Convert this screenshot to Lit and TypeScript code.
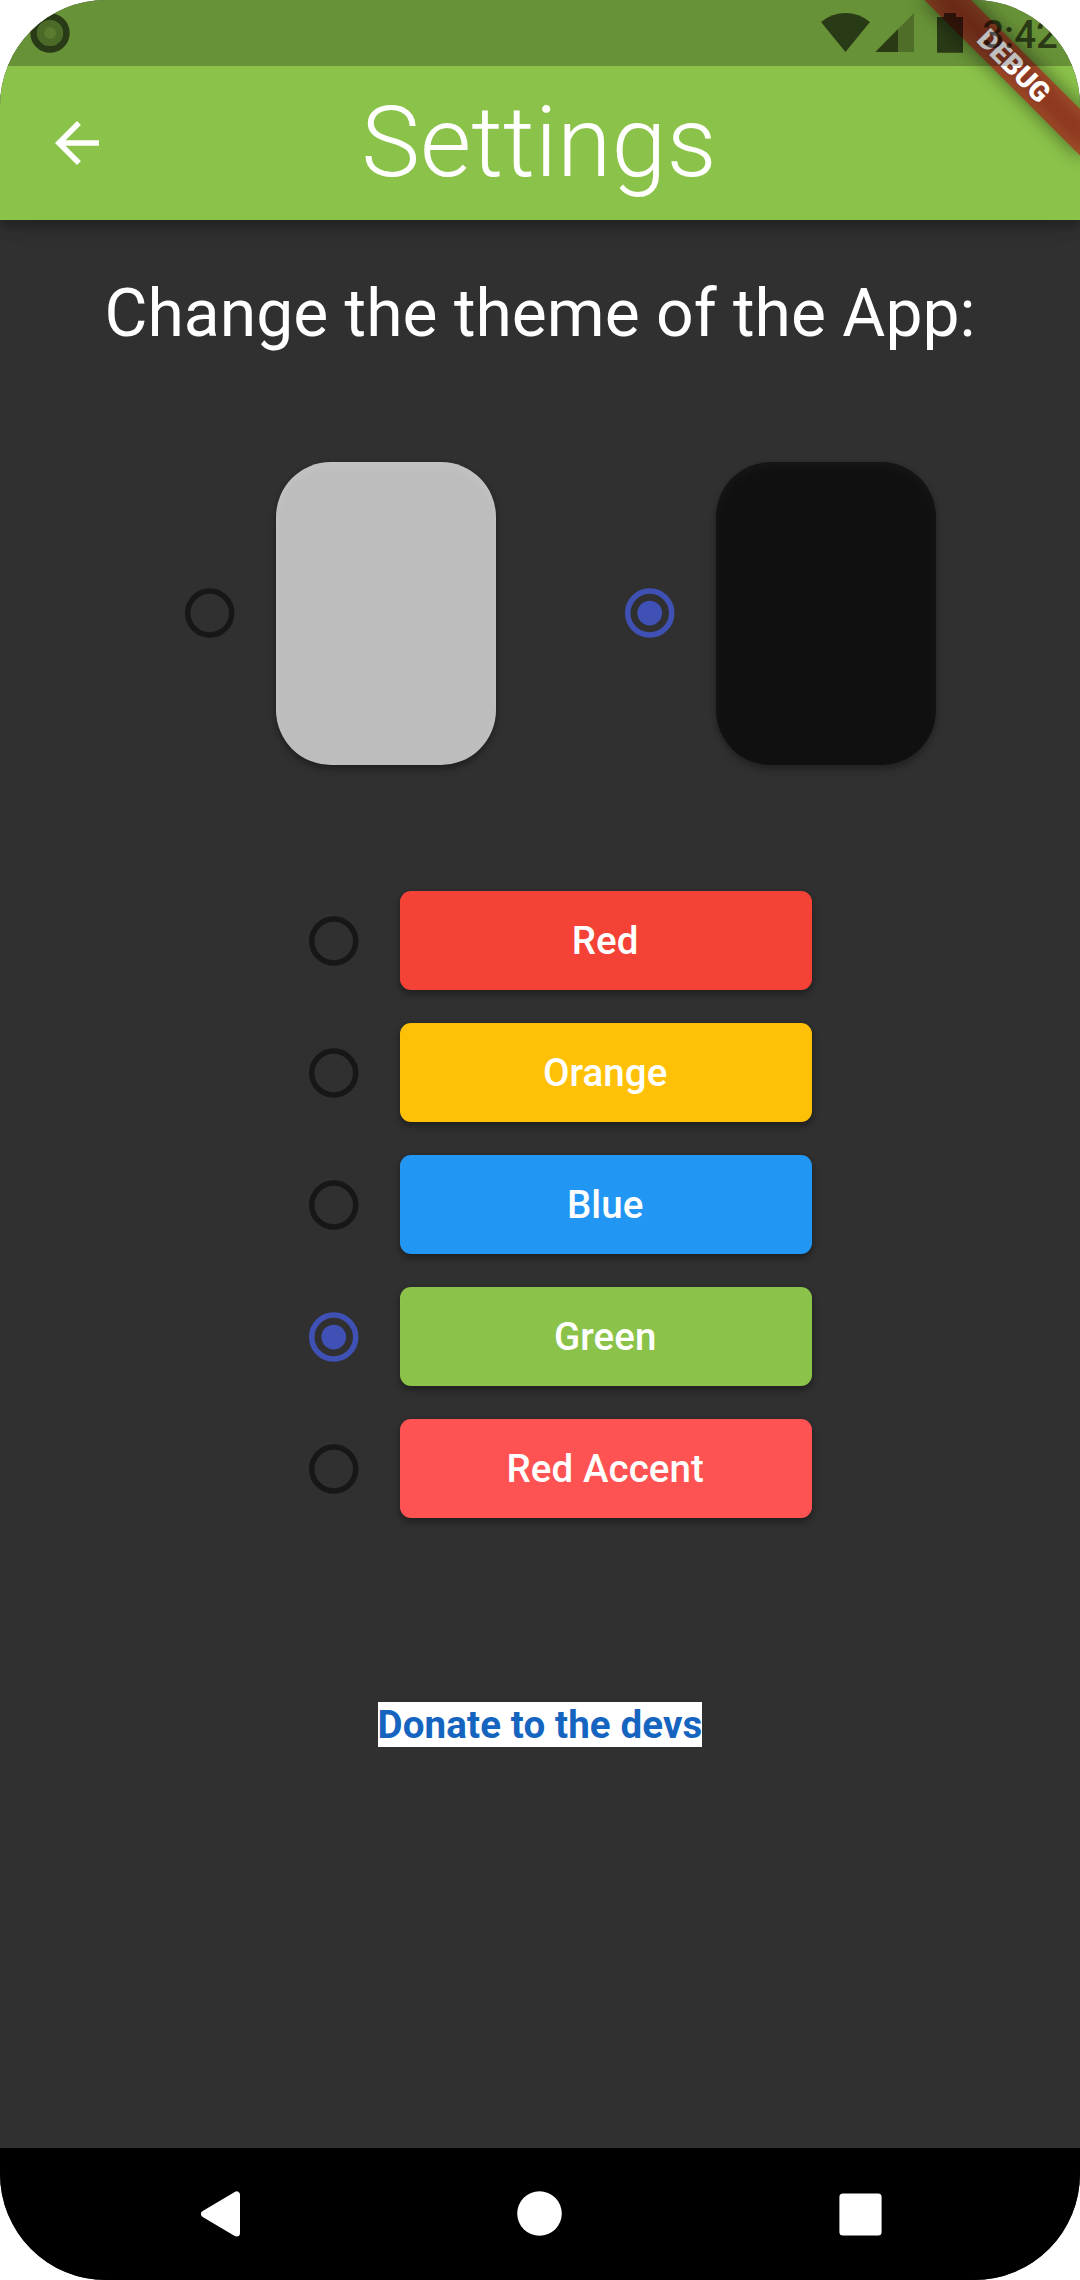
import { LitElement, html, svg, css } from "lit";
import { customElement, property, state } from "lit/decorators.js";
import { classMap } from "lit/directives/class-map.js";

@customElement("radio-mark")
class RadioMark extends LitElement {
  @property({ type: Boolean }) checked = false;

  static styles = css`
    :host {
      display: flex;
      align-items: center;
      justify-content: center;
      width: 132px;
      height: 132px;
      flex: none;
    }
    .mark { display: block; width: 66px; height: 66px; color: #171717; }
    .on { color: #3f51b5; }
  `;

  render() {
    return html`<svg class=${classMap({ mark: true, on: this.checked })} viewBox="0 0 24 24">
      <circle cx="11.9" cy="12" r="8" fill="none" stroke="currentColor" stroke-width="2"></circle>
      ${this.checked ? svg`<circle cx="11.9" cy="12" r="4.5" fill="currentColor"></circle>` : null}
    </svg>`;
  }
}

@customElement("app-root")
class AppRoot extends LitElement {
  @state() private theme = "dark";
  @state() private accent = "Green";

  private themes = ["light", "dark"];
  private accents = [
    { name: "Red", cls: "red" },
    { name: "Orange", cls: "orange" },
    { name: "Blue", cls: "blue" },
    { name: "Green", cls: "green" },
    { name: "Red Accent", cls: "red-accent" },
  ];

  static styles = css`
    :host {
      display: block;
      width: 1080px;
      height: 2280px;
      background: #fff;
      font-family: Roboto, "Liberation Sans", sans-serif;
      color: #fff;
    }
    .screen {
      position: relative;
      box-sizing: border-box;
      display: flex;
      flex-direction: column;
      width: 1080px;
      height: 2280px;
      overflow: hidden;
      border-radius: 106px;
      background: #303030;
    }
    .appbar {
      box-sizing: border-box;
      display: grid;
      grid-template-columns: 110px 1fr 110px;
      align-items: center;
      height: 220px;
      padding: 66px 22px 0;
      flex: none;
      background: #8bc34a;
      box-shadow: 0 6px 12px rgba(0, 0, 0, 0.26), 0 2px 24px rgba(0, 0, 0, 0.12);
    }
    .back { display: block; width: 66px; height: 66px; margin-left: 22px; }
    .title {
      margin: 0;
      padding: 0 2px 2px 0;
      text-align: center;
      font-size: 99px;
      line-height: 116px;
      font-weight: 300;
      white-space: nowrap;
    }
    .body {
      flex: 1;
      display: flex;
      flex-direction: column;
      align-items: center;
      padding-top: 55px;
    }
    .heading {
      margin: 0;
      font-size: 66px;
      line-height: 77px;
      font-weight: 400;
      white-space: nowrap;
    }
    .themes { display: flex; gap: 88.6px; margin-top: 110px; }
    .theme { display: flex; align-items: center; }
    .swatch { width: 220px; height: 302.5px; border-radius: 55px; }
    .light {
      background: #bdbdbd;
      box-shadow: 0 5px 7px rgba(0, 0, 0, 0.26), 0 1px 5px rgba(0, 0, 0, 0.16),
        inset 0 5px 10px rgba(255, 255, 255, 0.1);
    }
    .dark {
      background: #101010;
      box-shadow: 0 5px 7px rgba(0, 0, 0, 0.24), 0 1px 5px rgba(0, 0, 0, 0.12),
        inset 0 5px 12px rgba(255, 255, 255, 0.035);
    }
    .accents { display: flex; flex-direction: column; margin-top: 110px; }
    .accent { display: flex; align-items: center; height: 132px; }
    .button {
      box-sizing: border-box;
      display: flex;
      align-items: center;
      justify-content: center;
      width: 412.5px;
      height: 99px;
      border: 0;
      padding: 0 1.6px 0 0;
      border-radius: 11px;
      font: 500 38.5px/45px Roboto, "Liberation Sans", sans-serif;
      letter-spacing: 0.06px;
      color: #fff;
      box-shadow: 0 5px 7px rgba(0, 0, 0, 0.26), 0 1px 5px rgba(0, 0, 0, 0.16);
    }
    .red { background: #f44336; }
    .orange { background: #ffc107; }
    .blue { background: #2196f3; }
    .green { background: #8bc34a; }
    .red-accent { background: #ff5252; }
    .donate {
      box-sizing: border-box;
      height: 44.5px;
      margin-top: 167.5px;
      background: #fff;
      color: #1565c0;
      font-size: 38.5px;
      line-height: 46px;
      font-weight: 700;
      letter-spacing: 0.13px;
      white-space: nowrap;
    }
    .navbar {
      display: flex;
      align-items: center;
      justify-content: space-between;
      height: 132px;
      padding: 0 198px 0 201px;
      flex: none;
      background: #000;
    }
    .nav { display: block; }
    .home { margin-bottom: 1px; }
    .banner {
      position: absolute;
      top: 77px;
      left: 970px;
      width: 220px;
      height: 33px;
      transform-origin: 110px -77px;
      transform: rotate(45deg);
      text-align: center;
      font-size: 28.05px;
      line-height: 33px;
      font-weight: 900;
    }
    .banner::before,
    .banner::after {
      content: "";
      position: absolute;
      inset: 0;
    }
    .banner::before {
      z-index: -2;
      background: rgba(0, 0, 0, 0.5);
      filter: blur(10px);
    }
    .banner::after {
      z-index: -1;
      background: rgba(183, 28, 28, 0.627);
    }
    .status {
      position: absolute;
      inset: 0 0 auto 0;
      box-sizing: border-box;
      display: flex;
      align-items: flex-start;
      height: 66px;
      padding: 13px 22px 0 30px;
      background: rgba(0, 0, 0, 0.25);
      color: rgba(0, 0, 0, 0.6);
    }
    .record { display: block; width: 40px; height: 40px; margin-right: auto; }
    .indicators { display: block; width: 144px; height: 40px; margin-right: 18px; }
    .time { font-size: 38.5px; line-height: 43px; font-weight: 500; white-space: nowrap; }
  `;

  render() {
    return html`
      <div class="screen">
        <header class="appbar">
          <svg class="back" viewBox="0 0 24 24">
            <path fill="#fff" d="M20 11H7.83l5.59-5.59L12 4l-8 8 8 8 1.41-1.41L7.83 13H20v-2z"></path>
          </svg>
          <h1 class="title">Settings</h1>
        </header>
        <main class="body">
          <h2 class="heading">Change the theme of the App:</h2>
          <div class="themes">
            ${this.themes.map(
              (t) => html`<div class="theme" @click=${() => (this.theme = t)}>
                <radio-mark ?checked=${this.theme === t}></radio-mark>
                <div class=${classMap({ swatch: true, [t]: true })}></div>
              </div>`
            )}
          </div>
          <div class="accents">
            ${this.accents.map(
              (a) => html`<div class="accent" @click=${() => (this.accent = a.name)}>
                <radio-mark ?checked=${this.accent === a.name}></radio-mark>
                <button class=${classMap({ button: true, [a.cls]: true })}>${a.name}</button>
              </div>`
            )}
          </div>
          <div class="donate">Donate to the devs</div>
        </main>
        <nav class="navbar">
          <svg class="nav" width="39" height="46" viewBox="0 0 39 46">
            <path
              fill="#fff"
              stroke="#fff"
              stroke-width="7"
              stroke-linejoin="round"
              d="M3.5 22.9 35.5 3.9V41.9Z"
            ></path>
          </svg>
          <svg class="nav home" width="45" height="45" viewBox="0 0 45 45">
            <circle cx="22.5" cy="22.5" r="22.3" fill="#fff"></circle>
          </svg>
          <svg class="nav" width="43" height="43" viewBox="0 0 43 43">
            <rect x=".4" y=".4" width="42.2" height="42.2" rx="3.5" fill="#fff"></rect>
          </svg>
        </nav>
        <div class="banner">DEBUG</div>
        <div class="status">
          <svg class="record" viewBox="0 0 40 40">
            <circle cx="20" cy="20" r="16.4" fill="none" stroke="#000" stroke-opacity=".6" stroke-width="6.6"></circle>
            <circle cx="20" cy="20" r="13" fill="#000" fill-opacity=".27"></circle>
            <circle cx="20" cy="20" r="6" fill="#5a7b2f"></circle>
          </svg>
          <svg class="indicators" viewBox="0 0 144 40" fill="currentColor">
            <path d="M25.5 39 1 8.9Q12 0 25.5 0T50 8.9Z"></path>
            <path d="M55.3 39 94 0V39Z" fill-opacity=".4"></path>
            <path d="M55.3 39 78 16.1V39Z" fill-opacity=".79"></path>
            <path d="M117 4h7V0h12v4h7v35.7h-26z"></path>
          </svg>
          <span class="time">3:42</span>
        </div>
      </div>
    `;
  }
}
